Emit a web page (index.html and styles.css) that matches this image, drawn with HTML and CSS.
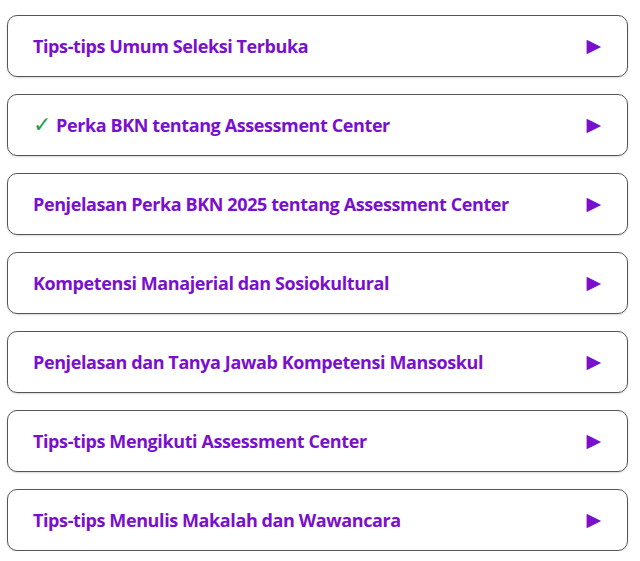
FILE: index.html
```html
<!DOCTYPE html>
<html>
<head>
<meta charset="utf-8">
<link rel="stylesheet" href="styles.css">
</head>
<body>
<div class="list">
  <div class="item"><span class="title">Tips-tips Umum Seleksi Terbuka</span><span class="arrow">▶</span></div>
  <div class="item"><span class="title"><span class="check">✓</span>Perka BKN tentang Assessment Center</span><span class="arrow">▶</span></div>
  <div class="item"><span class="title">Penjelasan Perka BKN 2025 tentang Assessment Center</span><span class="arrow">▶</span></div>
  <div class="item"><span class="title">Kompetensi Manajerial dan Sosiokultural</span><span class="arrow">▶</span></div>
  <div class="item"><span class="title">Penjelasan dan Tanya Jawab Kompetensi Mansoskul</span><span class="arrow">▶</span></div>
  <div class="item"><span class="title">Tips-tips Mengikuti Assessment Center</span><span class="arrow">▶</span></div>
  <div class="item"><span class="title">Tips-tips Menulis Makalah dan Wawancara</span><span class="arrow">▶</span></div>
</div>
</body>
</html>
```
FILE: styles.css
```css
html, body {
  margin: 0;
  padding: 0;
  background: #ffffff;
}
.list {
  display: flex;
  flex-direction: column;
  gap: 17px;
  padding: 15px 12px 0 7px;
}
.item {
  box-sizing: border-box;
  height: 62px;
  border: 1px solid #555;
  border-radius: 10px;
  display: flex;
  align-items: center;
  justify-content: space-between;
  padding: 0 26px 0 25px;
  box-shadow: 0 1px 2px rgba(0,0,0,0.15);
}
.title {
  display: flex;
  align-items: center;
  font-family: "Open Sans", sans-serif;
  font-weight: 700;
  font-size: 18px;
  color: #7a0fce;
  letter-spacing: -0.4px;
}
.check {
  color: #20a048;
  font-family: "DejaVu Sans", sans-serif;
  font-weight: 400;
  font-size: 22px;
  line-height: 1;
  margin-right: 5px;
}
.arrow {
  color: #7a0fce;
  font-family: "DejaVu Sans", sans-serif;
  font-size: 19px;
  line-height: 1;
  margin-bottom: 2px;
}
```
